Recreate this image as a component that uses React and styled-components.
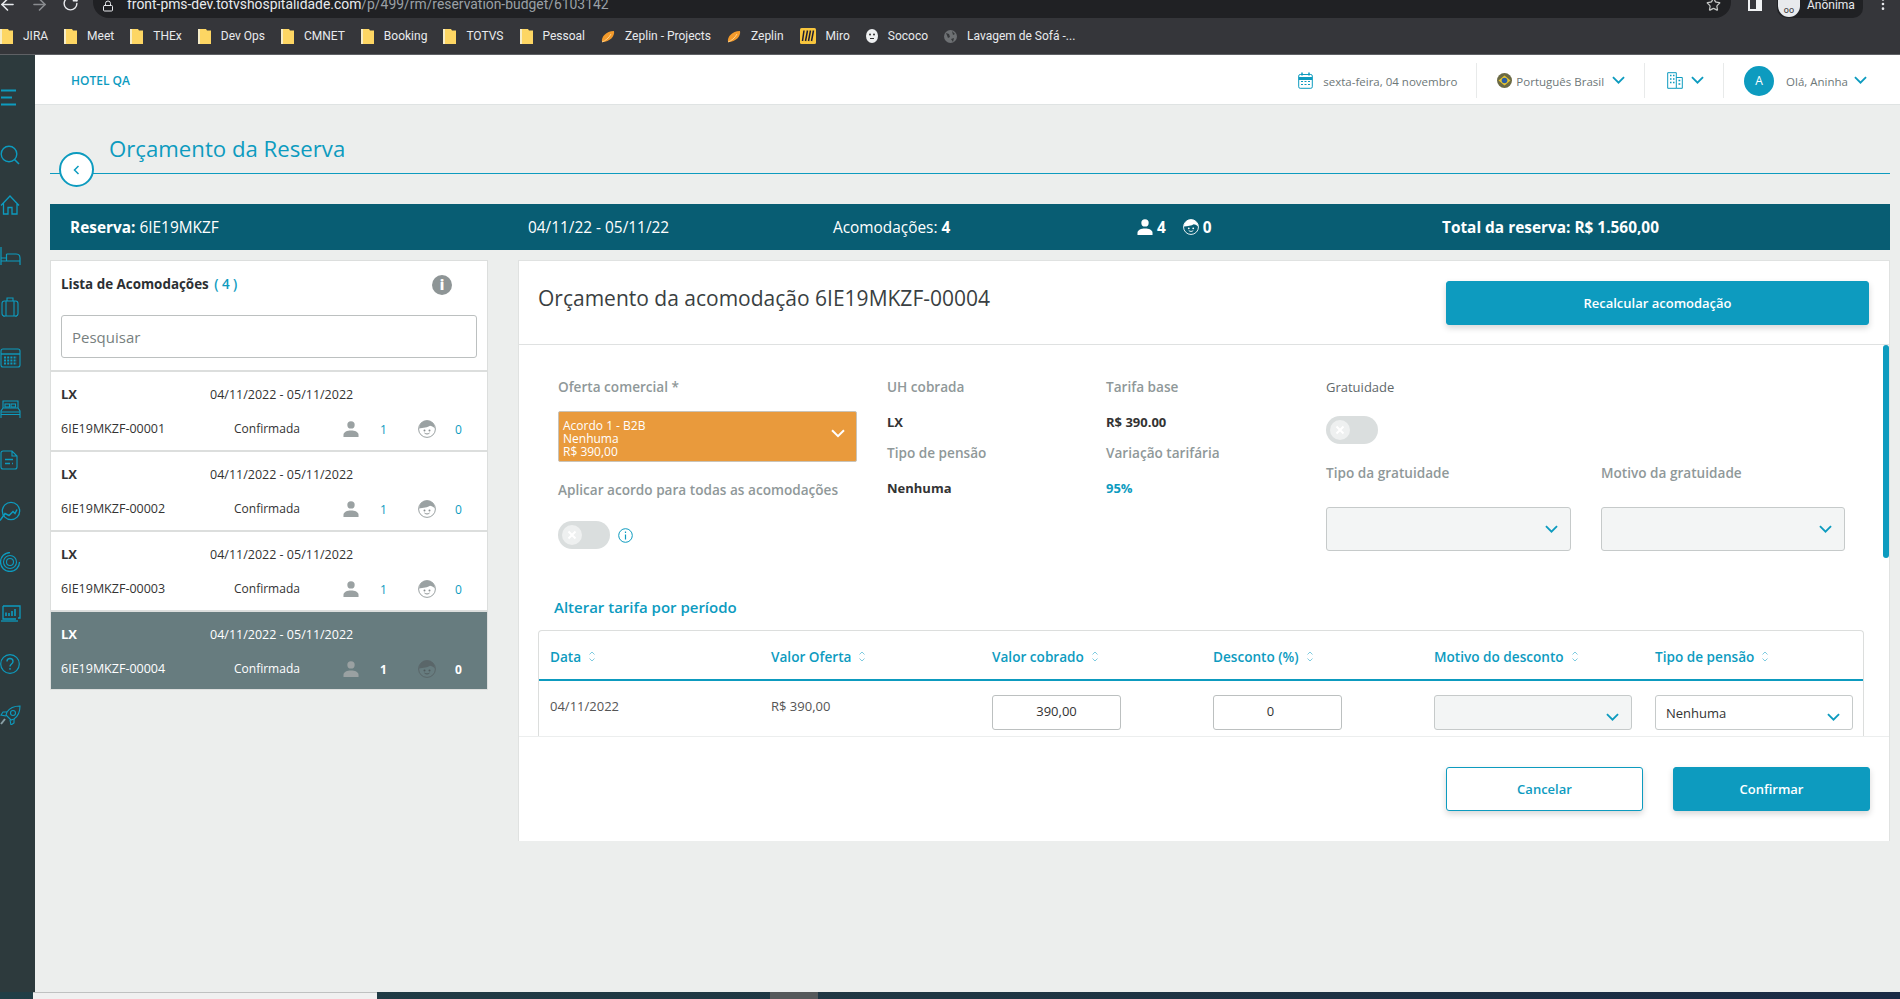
import styled, { createGlobalStyle } from 'styled-components';
import { Star, ArrowLeft, ArrowRight, RotateCw, Lock, EllipsisVertical } from 'lucide-react';

const blue = '#0d9bbf';
const GlobalStyle = createGlobalStyle`
  * { box-sizing: border-box; }
  html, body { margin: 0; padding: 0; height: 100%; overflow: hidden; }
  body { font-family: "Open Sans", "Liberation Sans", sans-serif; color: #333; background: #eceeed; }
`;

const Page = styled.div`
  width: 1900px;
  height: 999px;
  display: flex;
  flex-direction: column;
`;
/* browser chrome */
const Chrome = styled.div`
  height: 55px;
  flex: none;
  background: #35363a;
  border-bottom: 1px solid #5f6165;
  font-family: Roboto, "Liberation Sans", sans-serif;
`;
const TopRow = styled.div`
  height: 18px;
  display: flex;
  align-items: flex-start;
  overflow: hidden;
  color: #e8eaed;
`;
const NavIcons = styled.div`
  width: 95px;
  flex: none;
  display: flex;
  gap: 13px;
  margin-top: -5px;
  margin-left: -2px;
`;
const AddressBar = styled.div`
  width: 1638px;
  height: 18px;
  flex: none;
  background: #202124;
  border-radius: 0 0 16px 16px;
  display: flex;
  align-items: flex-start;
  padding-left: 9px;
  position: relative;
  overflow: hidden;
`;
const Url = styled.span`
  font-size: 13.9px;
  line-height: 16px;
  margin: -4px 0 0 13px;
  color: #e8eaed;
  white-space: nowrap;
  b { font-weight: 400; color: #9aa0a6; }
`;
const StarSlot = styled.span`
  position: absolute;
  right: 10px;
  top: -3px;
  color: #c4c7c5;
`;
const TopRight = styled.div`
  flex: 1;
  display: flex;
  align-items: flex-start;
`;
const PanelGlyph = styled.span`
  width: 14px;
  height: 11px;
  margin: 0 0 0 17px;
  border: 2px solid #f1f3f4;
  border-top: 0;
  border-right-width: 6px;
`;
const Incognito = styled.div`
  width: 86px;
  height: 18px;
  margin-left: 15px;
  background: #202124;
  border-radius: 0 0 10px 10px;
  display: flex;
  font-size: 12px;
  line-height: 10px;
  color: #e8eaed;
  gap: 7px;
  padding-left: 1px;
`;
const IncognitoFace = styled.span`
  width: 22px;
  height: 17px;
  border-radius: 0 0 11px 11px;
  background: #e8eaed;
  color: #333;
  font-size: 9px;
  line-height: 20px;
  text-align: center;
`;
const Dots = styled.span`
  margin: -4px 0 0 12px;
`;
const Bookmarks = styled.div`
  height: 36px;
  display: flex;
  align-items: center;
  gap: 16px;
  font-size: 12px;
  color: #e8eaed;
`;
const Bookmark = styled.span`
  display: inline-flex;
  align-items: center;
  gap: 10px;
  white-space: nowrap;
`;

/* app frame */
const Middle = styled.div`
  flex: 1;
  min-height: 0;
  display: flex;
`;
const Sidebar = styled.nav`
  width: 35px;
  flex: none;
  background: #2d3a3d;
  display: flex;
  flex-direction: column;
  gap: 31px;
  padding-top: 33px;
  color: ${blue};
  overflow: hidden;
  svg { flex: none; display: block; }
  svg:first-child { margin-bottom: 6px; }
  svg:nth-child(2) { margin-bottom: -1px; }
`;
const Main = styled.main`
  flex: 1;
  min-width: 0;
  display: flex;
  flex-direction: column;
`;
const TopBar = styled.header`
  height: 50px;
  flex: none;
  background: #fff;
  border-bottom: 1px solid #dfe3e3;
  display: flex;
  align-items: center;
  justify-content: space-between;
  padding: 2px 0 0 36px;
`;
const HotelName = styled.span`
  font-size: 12px;
  font-weight: 600;
  color: ${blue};
`;
const TopTools = styled.div`
  display: flex;
  align-items: center;
`;
const Tool = styled.div`
  height: 35px;
  display: flex;
  align-items: center;
  gap: ${(p) => p.$gap || 8}px;
  padding: 0 ${(p) => p.$right || 20}px 0 ${(p) => p.$left || 20}px;
  border-left: ${(p) => (p.$first ? 'none' : '1px solid #e8eaea')};
  font-size: 11.5px;
  color: #6d7778;
  white-space: nowrap;
`;
const ToolText = styled.span`
  margin: 2px ${(p) => p.$after || 0}px 0 0;
`;
const Avatar = styled.span`
  width: 30px;
  height: 30px;
  margin-right: 6px;
  border-radius: 50%;
  background: ${blue};
  color: #fff;
  font-size: 12px;
  display: flex;
  align-items: center;
  justify-content: center;
`;
const Content = styled.div`
  flex: 1;
  padding: 0 10px 0 15px;
`;
const TitleRow = styled.div`
  height: 69px;
  margin-bottom: 30px;
  border-bottom: 1px solid ${blue};
  position: relative;
  display: flex;
  align-items: flex-end;
  padding: 0 0 9px 59px;
`;
const PageTitle = styled.h1`
  margin: 0;
  font-size: 22.2px;
  line-height: 30px;
  font-weight: 400;
  color: ${blue};
`;
const BackButton = styled.button`
  position: absolute;
  left: 9px;
  top: 47px;
  width: 35px;
  height: 35px;
  padding: 0;
  border-radius: 50%;
  border: 2px solid ${blue};
  background: #fff;
  color: ${blue};
  display: flex;
  align-items: center;
  justify-content: center;
`;
const Summary = styled.div`
  height: 46px;
  background: #085d73;
  color: #fff;
  display: grid;
  grid-template-columns: 458px 305px 304px 305px 1fr;
  align-items: center;
  padding-left: 20px;
  font-size: 15.4px;
  b { font-weight: 700; }
`;
const SummaryPeople = styled.div`
  display: flex;
  align-items: center;
  gap: 4px;
  font-weight: 700;
  span { margin-right: 13px; }
`;
const Columns = styled.div`
  display: flex;
  gap: 30px;
  margin-top: 10px;
  align-items: flex-start;
`;

/* left list */
const ListPanel = styled.aside`
  width: 438px;
  flex: none;
  background: #fff;
  border: 1px solid #dcdedd;
`;
const ListHead = styled.div`
  padding: 13px 10px 12px 10px;
`;
const ListTitleRow = styled.div`
  height: 20px;
  display: flex;
  align-items: center;
  justify-content: space-between;
  padding-right: 25px;
  font-size: 13.4px;
  font-weight: 700;
  color: #2b2f33;
  em { font-style: normal; font-weight: 600; color: ${blue}; margin-left: 2px; }
`;
const InfoDot = styled.span`
  width: 20px;
  height: 20px;
  margin-top: 2px;
  border-radius: 50%;
  background: #8e9596;
  color: #fff;
  font-size: 14px;
  font-weight: 800;
  line-height: 20px;
  text-align: center;
`;
const SearchBox = styled.input`
  display: block;
  width: 416px;
  height: 43px;
  margin-top: 21px;
  padding: 0 10px;
  border: 1px solid #bcc0c0;
  border-radius: 3px;
  font: 400 15px "Open Sans", sans-serif;
  outline: none;
  &::placeholder { color: #777f80; opacity: 1; }
`;
const ListItem = styled.div`
  height: 80px;
  padding: 13px 10px 0;
  border-top: 2px solid #dcdedd;
  background: ${(p) => (p.$active ? '#677c7f' : '#fff')};
  color: ${(p) => (p.$active ? '#fff' : '#333')};
  &:last-child { height: 79px; }
`;
const ItemTop = styled.div`
  height: 18px;
  display: flex;
  align-items: center;
  font-size: 12.5px;
`;
const ItemName = styled.strong`
  width: 149px;
  font-size: 13px;
  font-weight: 700;
`;
const ItemBottom = styled.div`
  height: 18px;
  margin-top: 16px;
  display: grid;
  grid-template-columns: 173px 109px 16px 21px 8px 30px 20px 17px;
  align-items: center;
  font-size: 12.5px;
`;
const ItemStatus = styled.span`
  font-size: 12px;
`;
const Count = styled.span`
  grid-column: ${(p) => p.$col};
  font-size: 12px;
  font-weight: ${(p) => (p.$active ? 700 : 400)};
  color: ${(p) => (p.$active ? '#fff' : blue)};
  margin-top: 2px;
`;
const PersonSlot = styled.span`
  grid-column: ${(p) => p.$col};
  display: flex;
  color: ${(p) => p.$color};
`;

/* right panel */
const BudgetPanel = styled.section`
  width: 1372px;
  flex: none;
  height: 581px;
  background: #fff;
  border: 1px solid #e0e2e1;
  border-bottom: 0;
`;
const BudgetHead = styled.div`
  height: 84px;
  border-bottom: 1px solid #dfe1e1;
  display: flex;
  justify-content: space-between;
  padding: 20px 20px 0 19px;
`;
const BudgetTitle = styled.h2`
  margin: 3px 0 0;
  font-size: 21px;
  line-height: 28px;
  font-weight: 400;
  color: #3a3f42;
`;
const Button = styled.button`
  height: 44px;
  width: ${(p) => p.$width}px;
  border-radius: 3px;
  border: 1px solid ${blue};
  background: ${(p) => (p.$outline ? '#fff' : blue)};
  color: ${(p) => (p.$outline ? blue : '#fff')};
  font: 600 13px "Open Sans", sans-serif;
  box-shadow: 0 3px 6px rgba(0, 0, 0, 0.16);
`;
const BudgetBody = styled.div`
  height: 391px;
  position: relative;
  overflow: hidden;
`;
const ScrollThumb = styled.div`
  position: absolute;
  top: 0;
  right: 0;
  width: 6px;
  height: 213px;
  border-radius: 3px;
  background: ${blue};
`;
const FormGrid = styled.div`
  display: grid;
  grid-template-columns: 329px 219px 220px 1fr;
  padding: 33px 0 0 39px;
  height: 205px;
`;
const Stack = styled.div`
  display: flex;
  flex-direction: column;
  align-items: flex-start;
`;
const Label = styled.label`
  display: block;
  height: 18px;
  line-height: 18px;
  margin-top: ${(p) => p.$top || 0}px;
  font-size: ${(p) => (p.$plain ? 13 : 13.6)}px;
  font-weight: ${(p) => (p.$plain ? 500 : 600)};
  color: ${(p) => (p.$plain ? '#5f686a' : '#8f9899')};
  white-space: nowrap;
`;
const Value = styled.div`
  height: 18px;
  line-height: 18px;
  margin-top: 17px;
  font-size: 13px;
  font-weight: 700;
  color: ${(p) => p.$color || '#333'};
`;
const OfferSelect = styled.div`
  width: 299px;
  height: 51px;
  margin-top: 15px;
  padding: 3px 11px 0 4px;
  background: #e99a3c;
  border: 1px solid #c9c3b8;
  border-radius: 2px;
  color: #fff;
  font-size: 12px;
  line-height: 13px;
  display: flex;
  justify-content: space-between;
  align-items: center;
  p { margin: 0; }
  svg { margin-top: -9px; }
`;
const ToggleRow = styled.div`
  display: flex;
  align-items: center;
  gap: 8px;
  margin-top: ${(p) => p.$top}px;
  color: ${blue};
`;
const Toggle = styled.span`
  width: 52px;
  height: 28px;
  border-radius: 14px;
  background: #dadede;
  display: flex;
  align-items: center;
  padding-left: 4px;
`;
const Knob = styled.span`
  width: 20px;
  height: 20px;
  border-radius: 50%;
  background: #eef0f0;
  display: flex;
  align-items: center;
  justify-content: center;
`;
const GratuityGrid = styled.div`
  display: grid;
  grid-template-columns: 245px 244px;
  column-gap: 30px;
  margin-top: 20px;
`;
const Select = styled.div`
  width: ${(p) => p.$width}px;
  height: ${(p) => p.$height}px;
  margin-top: ${(p) => p.$top || 0}px;
  background: ${(p) => (p.$disabled ? '#f3f5f5' : '#fff')};
  border: 1px solid #c6caca;
  border-radius: 3px;
  padding: 0 12px 0 ${(p) => (p.$height < 40 ? 10 : 12)}px;
  display: flex;
  justify-content: space-between;
  align-items: center;
  color: #333;
  font-size: 13px;
`;
const RowSelect = styled(Select)`
  svg { margin-top: 10px; }
`;
const PeriodLink = styled.a`
  display: block;
  height: 20px;
  line-height: 20px;
  margin: 47px 0 13px 35px;
  font-size: 15px;
  font-weight: 600;
  color: ${blue};
`;
const Table = styled.div`
  width: 1326px;
  margin-left: 19px;
  height: 200px;
  border: 1px solid #dcdedd;
  border-bottom: 0;
  border-radius: 4px 4px 0 0;
`;
const TableHead = styled.div`
  height: 50px;
  padding: 3px 0 0 11px;
  display: grid;
  grid-template-columns: repeat(6, 221px);
  align-items: center;
  border-bottom: 2px solid ${blue};
  font-size: 13.6px;
  font-weight: 600;
  color: ${blue};
`;
const HeadCell = styled.div`
  display: flex;
  align-items: center;
  gap: 7px;
  white-space: nowrap;
`;
const TableRow = styled.div`
  padding: 14px 0 0 11px;
  display: grid;
  grid-template-columns: repeat(6, 221px);
  align-items: start;
  font-size: 13px;
  color: #555;
`;
const CellText = styled.span`
  line-height: 18px;
  margin-top: 2px;
`;
const NumberInput = styled.div`
  width: 129px;
  height: 35px;
  padding-right: ${(p) => p.$shift || 0}px;
  border: 1px solid #bcc0c0;
  border-radius: 3px;
  background: #fff;
  color: #333;
  text-align: center;
  line-height: 31px;
`;
const BudgetFoot = styled.div`
  height: 105px;
  border-top: 1px solid #eceeee;
  display: flex;
  justify-content: flex-end;
  gap: 30px;
  padding: 30px 19px 0 0;
`;
const Taskbar = styled.div`
  height: 7px;
  flex: none;
  display: flex;
  background: linear-gradient(90deg, #213e46 0%, #1f3643 50%, #1a2a45 100%);
`;
const TaskLead = styled.span`
  width: 33px;
`;
const TaskSearch = styled.span`
  width: 344px;
  background: #f0f0f0;
  border-top: 1px solid #bfc1c1;
`;
const TaskGap = styled.span`
  width: 393px;
`;
const TaskActive = styled.span`
  width: 48px;
  background: #55595b;
`;

/* drawings */
const Chevron = ({ size = 14, color = blue, weight = 2 }) => (
  <svg width={size} height={size * 0.64} viewBox="0 0 14 9" fill="none" stroke={color} strokeWidth={weight}>
    <path d="M1 1.2l6 6 6-6" />
  </svg>
);
const SortArrows = () => (
  <svg width="8" height="13" viewBox="0 0 8 13" fill="none" stroke="#7fcbe0" strokeWidth="1">
    <path d="M1.5 4.5L4 2l2.500 2.500M1.500 8.500L4 11l2.500-2.500" />
  </svg>
);
const Person = ({ size = 17 }) => (
  <svg width={size} height={size} viewBox="0 0 17 17" fill="currentColor">
    <circle cx="8.500" cy="4.200" r="3.900" />
    <path d="M0.500 17v-2.500c0-3 4-4.500 8-4.500s8 1.500 8 4.500V17z" />
  </svg>
);
const Kid = ({ size = 18, face = '#fff', hair = '#9aa1a2', eyes = '#8a9192' }) => (
  <svg width={size} height={size} viewBox="0 0 18 18">
    <circle cx="9" cy="9" r="8.400" fill={face} stroke={hair} strokeWidth="1" />
    <path d="M1 8.500A8 8 0 0 1 17 8.500C15 6.500 13.500 6 12 5.800 10 7.500 5 8 1 8.500z" fill={hair} />
    <circle cx="6.500" cy="10.500" r="1" fill={eyes} />
    <circle cx="11.500" cy="10.500" r="1" fill={eyes} />
    <path d="M6.500 13c1.500 1.300 3.500 1.300 5 0" fill="none" stroke={eyes} />
  </svg>
);
const Folder = () => (
  <svg width="13" height="15" viewBox="0 0 13 15">
    <path d="M0 0h8l1 1.500h4V15H0z" fill="#fdd663" />
    <path d="M0 0h2v15H0z" fill="#f6edc8" />
  </svg>
);
const ZeplinIcon = ({ size = 14 }) => (
  <svg width={size} height="13" viewBox="0 0 14 13">
    <path d="M1 12C0 7 5 1 13 1c1 5-4 11-12 11z" fill="#f39a2b" />
    <path d="M1 12c3-1 7-4 9-8" stroke="#ffd28a" fill="none" />
  </svg>
);
const MiroIcon = () => (
  <svg width="16" height="16" viewBox="0 0 16 16">
    <rect width="16" height="16" rx="1.500" fill="#f8c63d" />
    <path d="M4 2.500L2.500 13M7.500 2.500L5.500 13M10.500 2.500L8.500 13M13.500 2.500L11.500 13" stroke="#1d1d33" strokeWidth="1.500" />
  </svg>
);
const SococoIcon = () => (
  <svg width="12" height="14" viewBox="0 0 12 14">
    <ellipse cx="6" cy="7" rx="6" ry="7" fill="#eef0f1" />
    <circle cx="4" cy="5.500" r="1" fill="#333" />
    <circle cx="8" cy="5.500" r="1" fill="#333" />
    <path d="M4 9.500h4" stroke="#333" />
  </svg>
);
const GlobeIcon = () => (
  <svg width="13" height="13" viewBox="0 0 13 13">
    <circle cx="6.500" cy="6.500" r="6.500" fill="#6d7073" />
    <path d="M2 3l3 1 1 3-2 1zM8 1l3 3-2 1zM7 9l3-1-1 4z" fill="#36383b" />
  </svg>
);
const CalendarGlyph = () => (
  <svg width="15" height="17" viewBox="0 0 15 17" fill="none" stroke={blue}>
    <rect x="0.700" y="2.500" width="13.600" height="13.800" rx="1.500" />
    <path d="M0.700 6.500h13.600" strokeWidth="3" />
    <path d="M4 0.500v3M11 0.500v3" strokeWidth="1.500" />
    <path d="M3 9.500h9M3 12.500h9" strokeDasharray="2 1.500" />
  </svg>
);
const Flag = () => (
  <svg width="15" height="15" viewBox="0 0 15 15">
    <circle cx="7.500" cy="7.500" r="7.500" fill="#6b6a45" />
    <path d="M7.500 2.500l6 5-6 5-6-5z" fill="#e5c431" />
    <circle cx="7.500" cy="7.500" r="2.800" fill="#2b5fa8" />
  </svg>
);
const BuildingGlyph = () => (
  <svg width="16" height="17" viewBox="0 0 16 17" fill="none" stroke={blue}>
    <path d="M0.700 16.300V0.700h8.600v15.600zM9.300 5.500h6v10.800h-6" />
    <path d="M3 3.500h1.500M6 3.500h1.500M3 7h1.500M6 7h1.500M3 10.500h1.500M6 10.500h1.500M11.500 8.500h1.800M11.500 12h1.800" strokeWidth="1.500" />
  </svg>
);
const ToggleX = () => (
  <svg width="10" height="10" viewBox="0 0 10 10" stroke="#fff" strokeWidth="2">
    <path d="M1.500 1.500l7 7M8.500 1.500l-7 7" />
  </svg>
);
const InfoRing = () => (
  <svg width="15" height="15" viewBox="0 0 15 15" fill="none" stroke="currentColor">
    <circle cx="7.500" cy="7.500" r="6.800" />
    <path d="M7.500 6.500v5M7.500 3.500v1.500" strokeWidth="1.200" />
  </svg>
);
const BackChevron = () => (
  <svg width="7" height="10" viewBox="0 0 7 10" fill="none" stroke="currentColor" strokeWidth="1.500">
    <path d="M5.500 1L1.500 5l4 4" />
  </svg>
);

const NavGlyph = ({ children }) => (
  <svg width="21" height="20" viewBox="0 0 21 20" fill="none" stroke="currentColor" strokeWidth="1.100">
    {children}
  </svg>
);
const sideIcons = [
  <path key="m" d="M1 2.500h15M1 9.500h11M1 16.500h15" strokeWidth="2" />,
  <g key="s"><circle cx="9" cy="9" r="7.800" strokeWidth="1.400" /><path d="M14.500 14.500l4.500 4.500" strokeWidth="1.600" /></g>,
  <path key="h" d="M1 10.500L10 1l9 9.500M3.500 8v11h4.500v-6.500h4V19h5V8" strokeWidth="1.300" />,
  <path key="b" d="M1 1v18M1 15h19v4M6.500 8h9.500c2.500 0 4 1.500 4 4v3M6.500 8v7M1 12h5" strokeWidth="1.200" />,
  <g key="l"><rect x="2" y="4" width="16" height="15" rx="2.500" /><path d="M7 4V1h6v3M6 4v15M14 4v15M4 19v1M16 19v1" /></g>,
  <g key="c"><rect x="1" y="1" width="19" height="18" rx="2" /><path d="M1 6h19" strokeWidth="1.400" /><path d="M4 9.500h13M4 12.500h13M4 15.500h13" strokeWidth="2" strokeDasharray="2 1.200" /></g>,
  <g key="d"><path d="M3 9V2h15v7M1 17v-5l2-3h15l2 3v5M1 13h19M1 15.500h19M1 17v2M20 17v2" /><rect x="5" y="5" width="4.500" height="3" /><rect x="11" y="5" width="4.500" height="3" /></g>,
  <g key="f"><path d="M3 1h9l5 5v11a2 2 0 0 1-2 2H3a2 2 0 0 1-2-2V3a2 2 0 0 1 2-2zM12 1v5h5" /><path d="M5 9.500h8M5 13.500h5M12 13.500h1" strokeWidth="1.500" /></g>,
  <g key="g"><circle cx="11" cy="10" r="8.700" strokeWidth="1.300" /><path d="M0 19.500l5-7 4 2 4-4 2 2 2-4" strokeWidth="1.500" /></g>,
  <g key="t"><circle cx="10" cy="10" r="3.500" /><circle cx="10" cy="10" r="6.500" /><path d="M10 0.500a9.500 9.500 0 1 0 9.500 9.500" strokeWidth="1.300" /></g>,
  <g key="p"><path d="M3 3v13h13M3 3h17v12h-2" strokeWidth="1.300" /><path d="M6 13V9.500M9 13V10M12 13V8M15 13V6" strokeWidth="1.600" /><path d="M1 18h17" strokeWidth="1.300" /></g>,
  <g key="q"><circle cx="10" cy="10" r="9.300" strokeWidth="1.200" /><path d="M7 7.500c0-4 6-4 6 0 0 2.500-3 2.500-3 5M10 14v1.800" strokeWidth="1.400" /></g>,
  <g key="r"><path d="M7 7C10 2.500 15 1 20 1c0 5-1.500 10-6 13l-3 1-5-5z" /><circle cx="13" cy="8" r="2.500" /><path d="M7 7H3l-2 3 5 1M14 14v4l-3 2-1-5" /><path d="M1 19l4-5" stroke="#8aa0a6" strokeWidth="2" /></g>,
];

const bookmarks = [
  [<Folder key="i" />, 'JIRA'], [<Folder key="i" />, 'Meet'], [<Folder key="i" />, 'THEx'],
  [<Folder key="i" />, 'Dev Ops'], [<Folder key="i" />, 'CMNET'], [<Folder key="i" />, 'Booking'],
  [<Folder key="i" />, 'TOTVS'], [<Folder key="i" />, 'Pessoal'],
  [<ZeplinIcon key="i" />, 'Zeplin - Projects'], [<ZeplinIcon key="i" />, 'Zeplin'],
  [<MiroIcon key="i" />, 'Miro'], [<SococoIcon key="i" />, 'Sococo'], [<GlobeIcon key="i" />, 'Lavagem de Sofá -...'],
];
const rooms = ['00001', '00002', '00003', '00004'];
const headers = ['Data', 'Valor Oferta', 'Valor cobrado', 'Desconto (%)', 'Motivo do desconto', 'Tipo de pensão'];

export default function App() {
  return (
    <Page>
      <GlobalStyle />
      <Chrome>
        <TopRow>
          <NavIcons>
            <ArrowLeft size={19} />
            <ArrowRight size={19} color="#8a8c90" />
            <RotateCw size={17} />
          </NavIcons>
          <AddressBar>
            <Lock size={12} />
            <Url>front-pms-dev.totvshospitalidade.com<b>/p/499/rm/reservation-budget/6103142</b></Url>
            <StarSlot><Star size={15} /></StarSlot>
          </AddressBar>
          <TopRight>
            <PanelGlyph />
            <Incognito>
              <IncognitoFace>oo</IncognitoFace>
              Anônima
            </Incognito>
            <Dots><EllipsisVertical size={16} /></Dots>
          </TopRight>
        </TopRow>
        <Bookmarks>
          {bookmarks.map(([icon, name]) => (
            <Bookmark key={name}>{icon}{name}</Bookmark>
          ))}
        </Bookmarks>
      </Chrome>
      <Middle>
        <Sidebar>
          {sideIcons.map((icon) => (
            <NavGlyph key={icon.key}>{icon}</NavGlyph>
          ))}
        </Sidebar>
        <Main>
          <TopBar>
            <HotelName>HOTEL QA</HotelName>
            <TopTools>
              <Tool $first $gap={10} $right={19}><CalendarGlyph /><ToolText>sexta-feira, 04 novembro</ToolText></Tool>
              <Tool $gap={4} $right={19}><Flag /><ToolText $after={4}>Português Brasil</ToolText><Chevron size={13} /></Tool>
              <Tool $gap={8} $left={22} $right={19}><BuildingGlyph /><Chevron size={13} /></Tool>
              <Tool $gap={6} $right={33}><Avatar>A</Avatar><ToolText>Olá, Aninha</ToolText><Chevron size={13} /></Tool>
            </TopTools>
          </TopBar>
          <Content>
            <TitleRow>
              <PageTitle>Orçamento da Reserva</PageTitle>
              <BackButton aria-label="Voltar"><BackChevron /></BackButton>
            </TitleRow>
            <Summary>
              <div><b>Reserva:</b> 6IE19MKZF</div>
              <div>04/11/22 - 05/11/22</div>
              <div>Acomodações: <b>4</b></div>
              <SummaryPeople>
                <Person size={16} /><span>4</span>
                <Kid size={16} face="#085d73" hair="#fff" eyes="#fff" /><span>0</span>
              </SummaryPeople>
              <b>Total da reserva: R$ 1.560,00</b>
            </Summary>
            <Columns>
              <ListPanel>
                <ListHead>
                  <ListTitleRow>
                    <span>Lista de Acomodações <em>( 4 )</em></span>
                    <InfoDot>i</InfoDot>
                  </ListTitleRow>
                  <SearchBox placeholder="Pesquisar" />
                </ListHead>
                {rooms.map((room, index) => {
                  const active = index === 3;
                  return (
                    <ListItem key={room} $active={active}>
                      <ItemTop>
                        <ItemName>LX</ItemName>
                        <span>04/11/2022 - 05/11/2022</span>
                      </ItemTop>
                      <ItemBottom>
                        <span>6IE19MKZF-{room}</span>
                        <ItemStatus>Confirmada</ItemStatus>
                        <PersonSlot $col={3} $color="#9aa1a2"><Person size={16} /></PersonSlot>
                        <Count $col={5} $active={active}>1</Count>
                        <PersonSlot $col={7} $color="#9aa1a2">
                          {active ? <Kid face="#677c7f" hair="#5a6669" eyes="#4f5a5c" /> : <Kid />}
                        </PersonSlot>
                        <Count $col={9} $active={active}>0</Count>
                      </ItemBottom>
                    </ListItem>
                  );
                })}
              </ListPanel>
              <BudgetPanel>
                <BudgetHead>
                  <BudgetTitle>Orçamento da acomodação 6IE19MKZF-00004</BudgetTitle>
                  <Button $width={423}>Recalcular acomodação</Button>
                </BudgetHead>
                <BudgetBody>
                  <FormGrid>
                    <Stack>
                      <Label>Oferta comercial *</Label>
                      <OfferSelect>
                        <p>Acordo 1 - B2B<br />Nenhuma<br />R$ 390,00</p>
                        <Chevron color="#fff" />
                      </OfferSelect>
                      <Label $top={19}>Aplicar acordo para todas as acomodações</Label>
                      <ToggleRow $top={22}>
                        <Toggle><Knob><ToggleX /></Knob></Toggle>
                        <InfoRing />
                      </ToggleRow>
                    </Stack>
                    <Stack>
                      <Label>UH cobrada</Label>
                      <Value>LX</Value>
                      <Label $top={13}>Tipo de pensão</Label>
                      <Value>Nenhuma</Value>
                    </Stack>
                    <Stack>
                      <Label>Tarifa base</Label>
                      <Value>R$ 390.00</Value>
                      <Label $top={13}>Variação tarifária</Label>
                      <Value $color={blue}>95%</Value>
                    </Stack>
                    <Stack>
                      <Label $plain>Gratuidade</Label>
                      <ToggleRow $top={20}>
                        <Toggle><Knob><ToggleX /></Knob></Toggle>
                      </ToggleRow>
                      <GratuityGrid>
                        <div>
                          <Label>Tipo da gratuidade</Label>
                          <Select $disabled $width={245} $height={44} $top={25}>
                            <span />
                            <Chevron size={13} />
                          </Select>
                        </div>
                        <div>
                          <Label>Motivo da gratuidade</Label>
                          <Select $disabled $width={244} $height={44} $top={25}>
                            <span />
                            <Chevron size={13} />
                          </Select>
                        </div>
                      </GratuityGrid>
                    </Stack>
                  </FormGrid>
                  <PeriodLink>Alterar tarifa por período</PeriodLink>
                  <Table>
                    <TableHead>
                      {headers.map((header) => (
                        <HeadCell key={header}>{header}<SortArrows /></HeadCell>
                      ))}
                    </TableHead>
                    <TableRow>
                      <CellText>04/11/2022</CellText>
                      <CellText>R$ 390,00</CellText>
                      <NumberInput>390,00</NumberInput>
                      <NumberInput $shift={14}>0</NumberInput>
                      <RowSelect $disabled $width={198} $height={35}>
                        <span />
                        <Chevron size={13} />
                      </RowSelect>
                      <RowSelect $width={198} $height={35}>
                        <span>Nenhuma</span>
                        <Chevron size={13} />
                      </RowSelect>
                    </TableRow>
                  </Table>
                  <ScrollThumb />
                </BudgetBody>
                <BudgetFoot>
                  <Button $outline $width={197}>Cancelar</Button>
                  <Button $width={197}>Confirmar</Button>
                </BudgetFoot>
              </BudgetPanel>
            </Columns>
          </Content>
        </Main>
      </Middle>
      <Taskbar>
        <TaskLead />
        <TaskSearch />
        <TaskGap />
        <TaskActive />
      </Taskbar>
    </Page>
  );
}
